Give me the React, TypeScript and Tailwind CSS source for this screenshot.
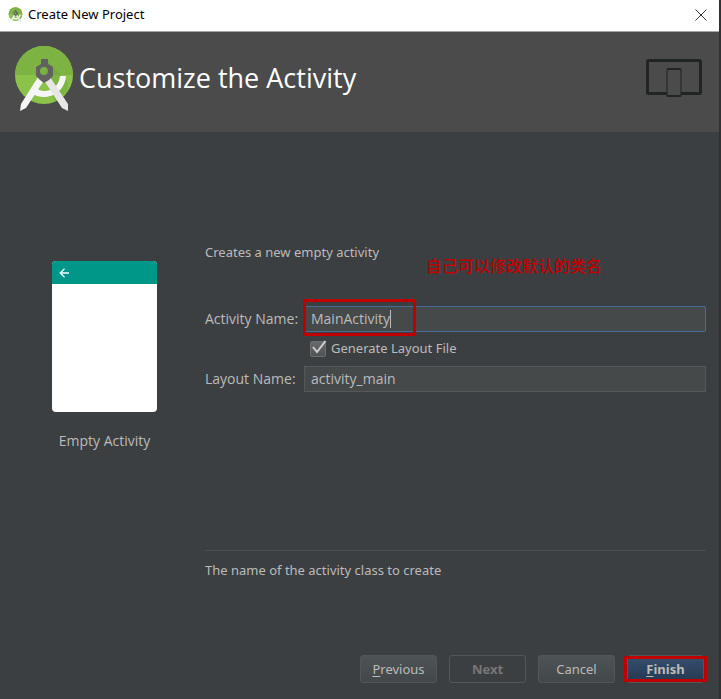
import { useState } from "react";

function StudioLogo({ className }: { className: string }) {
  return (
    <svg viewBox="0 0 60 67" className={className} aria-hidden="true">
      <circle cx="30" cy="30" r="29" fill="#8bc34a" />
      <path d="M1 30a29 29 0 0 1 58 0z" fill="#7cb342" />
      <path d="M34 17 54 37V46L41 57 30 34z" fill="#689f38" opacity=".35" />
      <path d="M46 31h6C51 43 42 52 30 52c-5 0-8-1-11-3l3-6c3 2 5 3 8 3 9 0 15-6 16-15z" fill="#f5f5f5" />
      <path d="M36 32 54 59v7l-6-3L31 37z" fill="#e6e6e6" />
      <path d="M24 32 7 59l-1 7 6-3 17-26z" fill="#f5f5f5" />
      <path
        fillRule="evenodd"
        d="M27 14h7v5l5 3v9l-4 4-5 3-4-3-4-4v-9l5-3zM30 22a4 4 0 1 0 0 8 4 4 0 0 0 0-8z"
        fill="#616161"
      />
    </svg>
  );
}

function DevicesIcon() {
  return (
    <svg viewBox="0 0 56 39" className="h-[39px] w-14" aria-hidden="true">
      <rect x="1.500" y="1.500" width="53" height="33" rx="1" fill="none" stroke="#212425" strokeWidth="3" />
      <rect x="20.500" y="9" width="15" height="29" rx="1.500" fill="#212425" />
      <rect x="21.500" y="11" width="13" height="25" fill="#4b4b4b" />
    </svg>
  );
}

function ActivityPreview() {
  return (
    <figure className="mx-auto flex w-[105px] flex-col items-center">
      <div className="h-[151px] w-full overflow-hidden rounded bg-white">
        <div className="flex h-[23px] items-center bg-[#009688] pl-[7px]">
          <svg viewBox="0 0 10 10" className="size-[10px]" fill="none" stroke="#f2fffd" strokeWidth="1.300" aria-hidden="true">
            <path d="M5.500 0.700 1.200 5l4.300 4.300M1.200 5H10" />
          </svg>
        </div>
      </div>
      <figcaption className="mt-[19px] whitespace-nowrap font-['Open_Sans',sans-serif] text-sm">Empty Activity</figcaption>
    </figure>
  );
}

const buttonBase = "h-7 w-[77px] rounded-[3px] border border-[#515658] text-center leading-5";
const raised = "bg-linear-to-b from-[#4e5355] to-[#424749]";
const fieldFont = "font-['Open_Sans',sans-serif] text-sm";

export default function App() {
  const [activity, setActivity] = useState("MainActivity");
  const [layout, setLayout] = useState("activity_main");
  const [generate, setGenerate] = useState(true);

  return (
    <div className="flex min-h-screen flex-col border-r-2 border-[#2f3133] bg-[#3c3f41] font-['Noto_Sans','Noto_Sans_CJK_SC',sans-serif] text-[13px] text-[#bbbbbb]">
      <div className="flex h-8 items-center border-b border-[#a5a5a5] bg-white pr-3 pb-px pl-2 text-black">
        <StudioLogo className="h-4 w-[15px]" />
        <span className="ml-[5px] flex-1">Create New Project</span>
        <button type="button" aria-label="Close">
          <svg viewBox="0 0 12 12" className="size-3" stroke="#333" aria-hidden="true">
            <path d="M.5.5l11 11M11.500.5l-11 11" />
          </svg>
        </button>
      </div>

      <header className="flex h-[100px] items-center bg-[#4b4b4b] pr-[17px] pb-2 pl-[14px]">
        <StudioLogo className="h-[67px] w-[60px]" />
        <h1 className="ml-[5px] flex-1 font-['Open_Sans',sans-serif] text-[27px] text-white">Customize the Activity</h1>
        <DevicesIcon />
      </header>

      <main className="flex flex-1">
        <aside className="w-[205px] pt-[129px] pl-1">
          <ActivityPreview />
        </aside>
        <section className="flex flex-1 flex-col pt-[110px] pr-[13px]">
          <div className="relative leading-5">
            Creates a new empty activity
            <span className="absolute top-[14px] left-[221px] whitespace-nowrap text-[16px] font-medium text-[#c00000]">
              自己可以修改默认的类名
            </span>
          </div>
          <div className="mt-11 flex items-center">
            <label htmlFor="activity" className={`w-[99px] whitespace-nowrap ${fieldFont}`}>Activity Name:</label>
            <div className="relative flex-1">
              <input
                id="activity"
                value={activity}
                onChange={(e) => setActivity(e.target.value)}
                className={`block h-[26px] w-full rounded-[2px] border border-[#466d94] bg-[#45494a] px-[6px] pb-px outline-none ${fieldFont}`}
              />
              <span className="absolute top-1 left-[86px] h-[18px] w-px bg-[#bbbbbb]" />
              <div className="pointer-events-none absolute top-[-7px] left-[-1px] h-[37px] w-[113px] border-3 border-[#c00000]" />
            </div>
          </div>
          <label className="mt-[7px] ml-[105px] flex h-5 items-center">
            <input
              type="checkbox"
              checked={generate}
              onChange={(e) => setGenerate(e.target.checked)}
              className="peer size-4 appearance-none rounded-[2px] border border-[#6b6f70] bg-linear-to-b from-[#676a6b] to-[#505354]"
            />
            <svg viewBox="0 0 16 16" className="invisible -ml-4 size-4 overflow-visible peer-checked:visible" fill="none" stroke="#d0d0d0" strokeWidth="2" aria-hidden="true">
              <path d="m3 6 4 5 8.500-11" />
            </svg>
            <span className="ml-[5px]">Generate Layout File</span>
          </label>
          <div className="mt-[7px] flex items-center">
            <label htmlFor="layout" className={`w-[99px] whitespace-nowrap ${fieldFont}`}>Layout Name:</label>
            <input
              id="layout"
              value={layout}
              onChange={(e) => setLayout(e.target.value)}
              className={`h-[26px] flex-1 border border-[#555859] bg-[#45494a] px-[6px] pb-px outline-none ${fieldFont}`}
            />
          </div>
          <div className="mt-auto h-[86px] border-t border-[#4b4e50] pt-[9px] leading-5">
            The name of the activity class to create
          </div>
        </section>
      </main>

      <footer className="flex justify-end gap-3 pt-[19px] pr-[15px] pb-4">
        <button type="button" className={`${buttonBase} ${raised}`}>
          <span className="underline underline-offset-2">P</span>revious
        </button>
        <button type="button" disabled className={`${buttonBase} font-bold text-[#777777]`}>Next</button>
        <button type="button" className={`${buttonBase} ${raised}`}>Cancel</button>
        <div className="relative">
          <button type="button" className={`${buttonBase} bg-linear-to-b from-[#35506f] to-[#263851] font-bold`}>
            <span className="underline underline-offset-2">F</span>inish
          </button>
          <div className="pointer-events-none absolute inset-x-[-3px] inset-y-px border-3 border-[#c00000]" />
        </div>
      </footer>
    </div>
  );
}
